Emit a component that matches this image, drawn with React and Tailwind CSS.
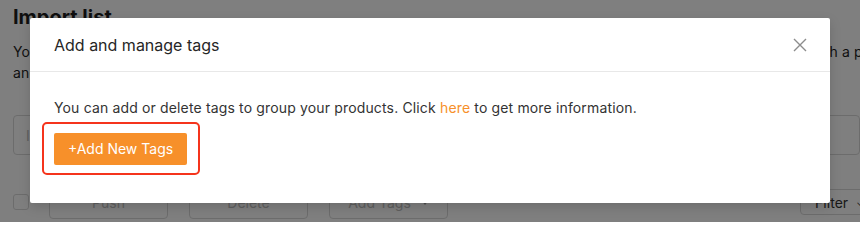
import React from "react";

function CloseIcon() {
  return (
    <svg width="14" height="14" viewBox="0 0 14 14" fill="none" stroke="#8c8c8c" strokeWidth="1.4">
      <path d="M1 1 L13 13 M13 1 L1 13" />
    </svg>
  );
}

function Caret() {
  return (
    <svg width="8" height="5" viewBox="0 0 8 5" fill="#999">
      <path d="M0 0 H8 L4 5 Z" />
    </svg>
  );
}

function PageBehind() {
  return (
    <div className="w-[860px] h-[222px] bg-white text-[#1f1f1f] pl-[13px]">
      <h1 className="text-[20px] font-bold leading-[28px] pt-[3px]">Import list</h1>
      <div className="text-[14px] leading-[21px] mt-[10px] tracking-[0.15px]">
        <div className="whitespace-nowrap overflow-hidden">
          You can edit product details here before they are pushed to your store. When the edits are complete, you can then publish a product
        </div>
        <div className="whitespace-nowrap">and its variants to your store with one click.</div>
      </div>
      <div className="mt-[32px] h-[40px] border border-[#d9d9d9] rounded-[4px] flex items-center px-[12px] text-[#bfbfbf] text-[14px]">
        Import list search
      </div>
      <div className="mt-[30px] mr-[-30px] flex items-center">
        <div className="w-[16px] h-[16px] border border-[#d9d9d9] rounded-[3px] bg-white" />
        <div className="ml-[20px] flex gap-[21px]">
          <div className="w-[119px] h-[34px] border border-[#d9d9d9] rounded-[4px] flex items-center justify-center text-[14px] text-[#bfbfbf]">Push</div>
          <div className="w-[119px] h-[34px] border border-[#d9d9d9] rounded-[4px] flex items-center justify-center text-[14px] text-[#bfbfbf]">Delete</div>
          <div className="w-[119px] h-[34px] border border-[#d9d9d9] rounded-[4px] flex items-center justify-center gap-[10px] text-[14px] text-[#bfbfbf]">
            Add Tags <Caret />
          </div>
        </div>
        <div className="ml-auto w-[90px] h-[26px] border border-[#d9d9d9] rounded-[4px] flex items-center pl-[14px] gap-[8px] text-[14px] text-[#333]">
          Filter <span className="text-[10px]">⌄</span>
        </div>
      </div>
    </div>
  );
}

export default function App() {
  return (
    <div
      className="relative w-[860px] h-[222px] overflow-hidden"
      style={{ fontFamily: "Inter, 'Liberation Sans', sans-serif" }}
    >
      <PageBehind />
      <div className="absolute inset-0 bg-black/50" />
      <div className="absolute left-[30px] top-[18px] w-[800px] h-[185px] bg-white rounded-[2px] shadow-[0_4px_12px_rgba(0,0,0,0.15)]">
        <div className="h-[54px] border-b border-[#e8e8e8] flex items-center justify-between pl-[24px] pr-[22px]">
          <span className="text-[16px] text-[#262626]">Add and manage tags</span>
          <button className="w-[16px] h-[16px] flex items-center justify-center">
            <CloseIcon />
          </button>
        </div>
        <div className="px-[24px] pt-[25px]">
          <p className="text-[14px] leading-[22px] text-[#333] tracking-[0.15px]">
            You can add or delete tags to group your products. Click{" "}
            <a className="text-[#f7902a] cursor-pointer">here</a> to get more information.
          </p>
          <div className="mt-[3px] -ml-[12px] w-[158px] h-[53px] border-2 border-[#f5341c] rounded-[5px] flex items-center pl-[10px]">
            <button className="w-[133px] h-[32px] bg-[#f7902a] rounded-[2px] text-white text-[14px] font-normal">
              +Add New Tags
            </button>
          </div>
        </div>
      </div>
    </div>
  );
}
